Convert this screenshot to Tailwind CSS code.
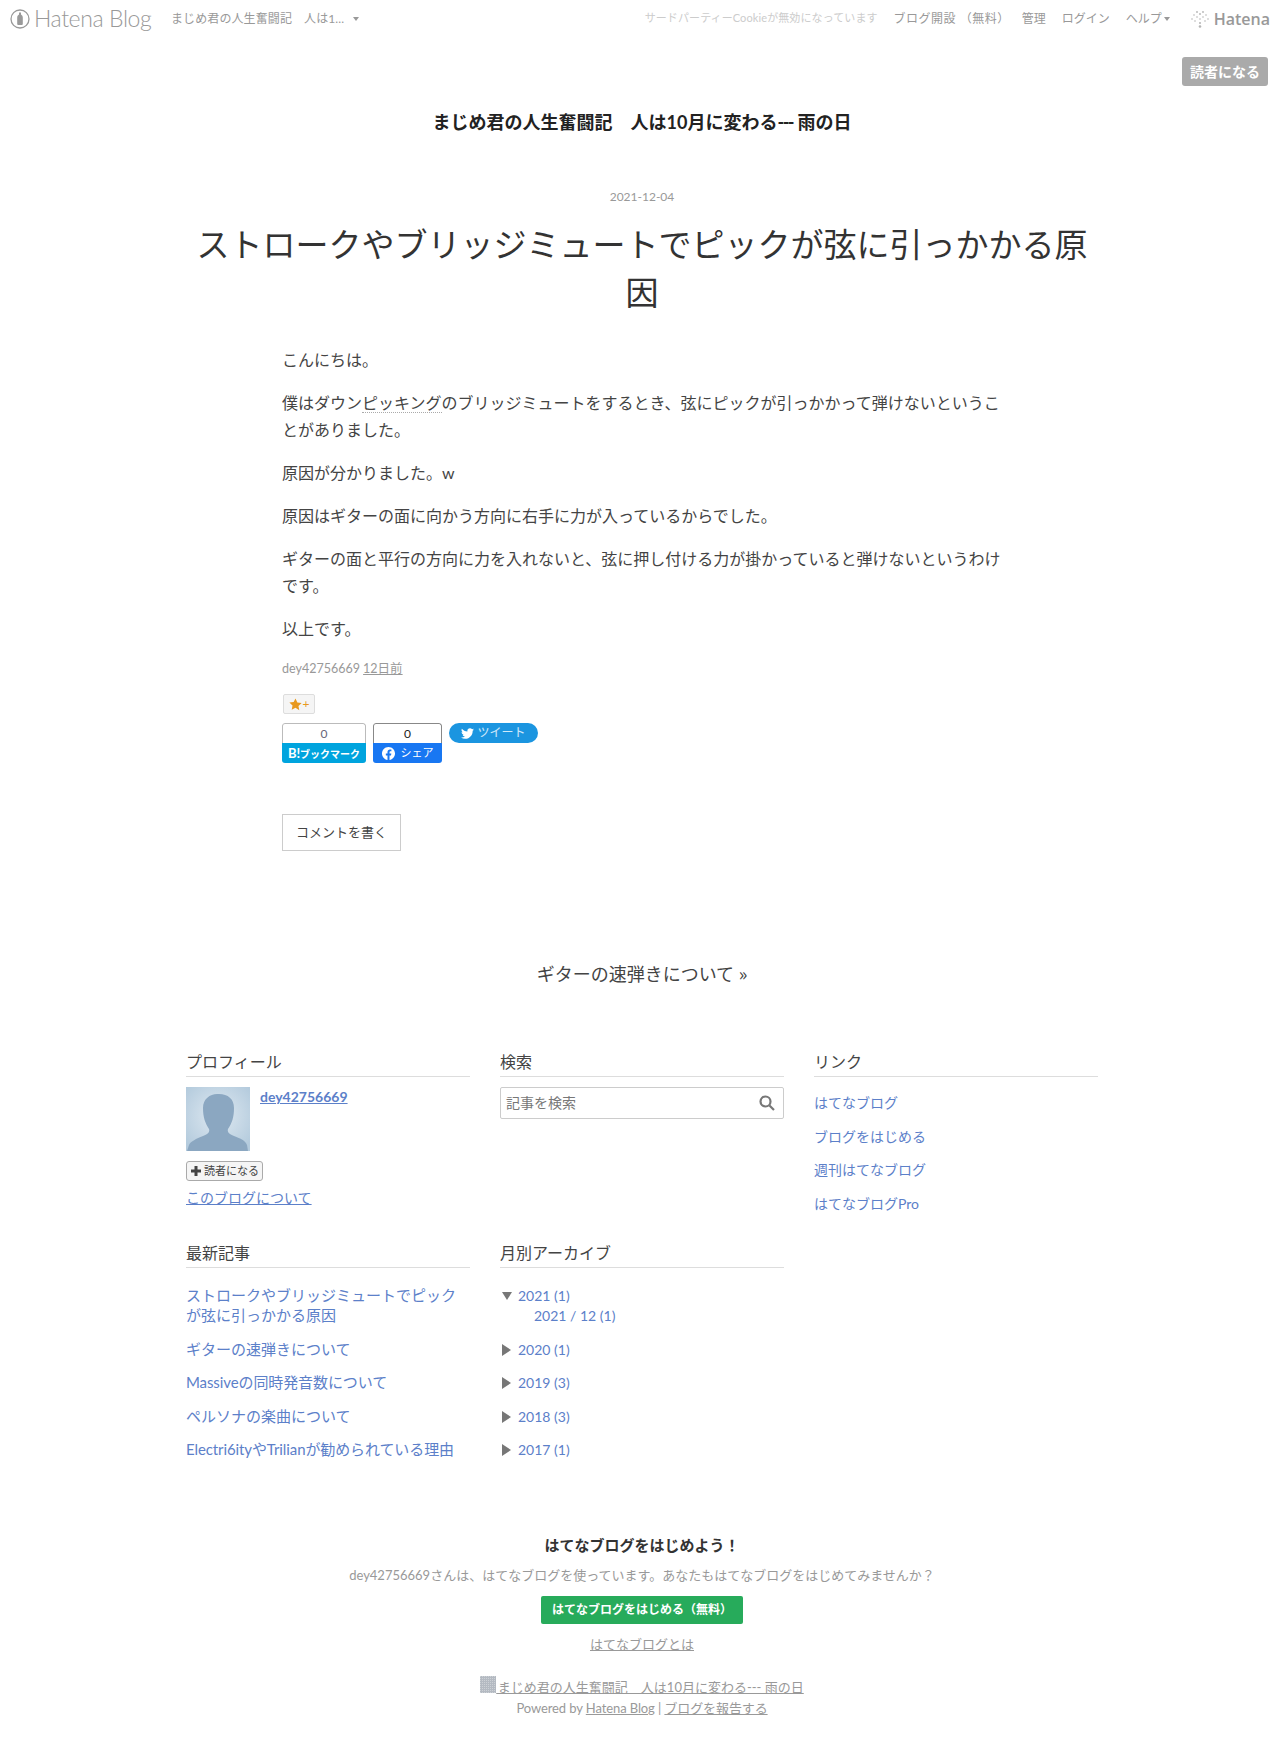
<!DOCTYPE html>
<html lang="ja">
<head>
    <meta charset="UTF-8">
    <meta name="viewport" content="width=device-width, initial-scale=1.0">
    <title>ストロークやブリッジミュートでピックが弦に引っかかる原因</title>
    <script src="https://cdn.jsdelivr.net/npm/@tailwindcss/browser@4"></script>
</head>
<body class="bg-white text-[#444] font-['Lato','Noto_Sans_CJK_JP',sans-serif] [text-spacing-trim:space-all] min-h-[1754px]">
    <!-- hatena navbar -->
    <nav class="h-[37px] flex items-center text-[12px] text-[#999]">
        <div class="flex items-center ml-[10px] w-[161px] gap-[4px]">
            <svg width="20" height="20" viewBox="0 0 20 20" fill="none">
                <circle cx="10" cy="10" r="9" stroke="#999" stroke-width="1.300"/>
                <path d="M9 3.500h2v2c1.300.8 1.800 1.800 1.800 3.200v6.300a1 1 0 01-1 1H8.200a1 1 0 01-1-1V8.700c0-1.400.5-2.400 1.800-3.200z" fill="#999"/>
            </svg>
            <span class="text-[23px] font-light leading-none text-[#999] -tracking-[0.4px] whitespace-nowrap">Hatena Blog</span>
        </div>
        <span class="whitespace-nowrap tracking-[0.1px]">まじめ君の人生奮闘記　人は1...</span>
        <span class="ml-[9px] w-0 h-0 border-x-[3px] border-x-transparent border-t-[4px] border-t-[#999]"></span>
        <div class="ml-auto flex items-center mr-[14px]">
            <span class="text-[11px] text-[#ccc] whitespace-nowrap tracking-[0.1px]">サードパーティーCookieが無効になっています</span>
            <a class="ml-[16px] whitespace-nowrap tracking-[0.5px]">ブログ開設 （無料）</a>
            <a class="ml-[12px]">管理</a>
            <a class="ml-[16px]">ログイン</a>
            <a class="ml-[16px]">ヘルプ</a>
            <span class="ml-[2px] w-0 h-0 border-x-[3px] border-x-transparent border-t-[4px] border-t-[#999]"></span>
            <svg class="ml-[21px]" width="18" height="18" viewBox="0 0 18 18" fill="#b5b5b5">
                <circle cx="6" cy="2" r=".9"/><circle cx="12" cy="2" r=".9"/><circle cx="9" cy="4" r=".9"/>
                <circle cx="3" cy="5" r=".8"/><circle cx="15" cy="5" r=".8"/><circle cx="6" cy="7" r=".8"/><circle cx="12" cy="7" r=".8"/>
                <circle cx="1" cy="9" r=".8"/><circle cx="17" cy="9" r=".8"/><circle cx="9" cy="9" r=".8"/>
                <circle cx="4" cy="11" r=".8"/><circle cx="14" cy="11" r=".8"/><circle cx="9" cy="13" r="1"/><circle cx="9" cy="16.500" r="1.300"/>
            </svg>
            <span class="ml-[5px] text-[16px] font-semibold font-['Open_Sans',sans-serif] text-[#999] leading-none">Hatena</span>
        </div>
    </nav>

    <div class="flex justify-end pr-[16px] pt-[20px]">
        <a class="w-[86px] h-[29px] rounded-[3px] bg-[#aaa] text-white text-[14px] font-bold flex items-center justify-center">読者になる</a>
    </div>

    <header class="text-center mt-[23px]">
        <h1 class="text-[18px] leading-[26px] font-bold text-[#222]">まじめ君の人生奮闘記　人は10月に変わる<span class="-tracking-[1.5px]">---</span> 雨の日</h1>
    </header>

    <!-- article -->
    <article class="mt-[53px]">
        <div class="text-center text-[12px] leading-[18px] text-[#999]">2021-12-04</div>
        <h2 class="mt-[14px] mx-auto w-[900px] text-center text-[33px] leading-[48px] font-normal text-[#333]">ストロークやブリッジミュートでピックが弦に引っかかる原因</h2>
        <div class="mt-[30px] ml-[282px] w-[724px] text-[16px] leading-[27px]">
            <p class="mb-[16px]">こんにちは。</p>
            <p class="mb-[16px]">僕はダウン<span class="border-b border-dotted border-[#aaa]">ピッキング</span>のブリッジミュートをするとき、弦にピックが引っかかって弾けないということがありました。</p>
            <p class="mb-[16px]">原因が分かりました。w</p>
            <p class="mb-[16px]">原因はギターの面に向かう方向に右手に力が入っているからでした。</p>
            <p class="mb-[16px]">ギターの面と平行の方向に力を入れないと、弦に押し付ける力が掛かっていると弾けないというわけです。</p>
            <p>以上です。</p>
        </div>
        <div class="ml-[282px] mt-[18px] text-[12.500px] leading-[18px] text-[#999]">dey42756669 <a class="underline">12日前</a></div>

        <div class="ml-[283px] mt-[16px] w-[32px] h-[20px] rounded-[2px] border border-[#ddd] bg-[#f5f5f5] flex items-center justify-center gap-[1px]">
            <svg width="13" height="13" viewBox="0 0 24 24" fill="#e8981d"><path d="M12 1l3.400 7.300 7.900 1-5.800 5.500 1.500 7.900L12 18l-7 3.700 1.500-7.900L.7 8.300l7.900-1z"/></svg>
            <span class="text-[12px] leading-none text-[#e8981d]">+</span>
        </div>

        <div class="ml-[282px] mt-[9px] flex items-start">
            <div class="w-[84px] h-[40px] rounded-[3px] overflow-hidden flex flex-col">
                <div class="h-[20px] border border-b-0 border-[#bbb] rounded-t-[3px] text-center text-[12px] leading-[19px] text-[#667]">0</div>
                <div class="h-[20px] bg-[#00a4de] text-white text-[10px] font-bold leading-[20px] text-center whitespace-nowrap"><span class="text-[13px]">B!</span>ブックマーク</div>
            </div>
            <div class="ml-[7px] w-[69px] h-[40px] rounded-[3px] overflow-hidden flex flex-col">
                <div class="h-[20px] border border-b-0 border-[#888] rounded-t-[3px] text-center text-[12px] leading-[19px] text-[#222]">0</div>
                <div class="h-[20px] bg-[#1877f2] text-white text-[11px] flex items-center justify-center gap-[6px]">
                    <svg width="13" height="13" viewBox="0 0 24 24" fill="#fff"><path d="M24 12.073c0-6.627-5.373-12-12-12s-12 5.373-12 12c0 5.990 4.388 10.954 10.125 11.854v-8.385H7.078v-3.470h3.047V9.430c0-3.007 1.792-4.669 4.533-4.669 1.312 0 2.686.235 2.686.235v2.953H15.830c-1.491 0-1.956.925-1.956 1.874v2.250h3.328l-.532 3.470h-2.796v8.385C19.612 23.027 24 18.062 24 12.073z"/></svg>
                    <span>シェア</span>
                </div>
            </div>
            <div class="ml-[7px] w-[89px] h-[20px] rounded-full bg-[#1b95e0] text-white/80 text-[12px] flex items-center justify-center gap-[3px]">
                <svg width="13" height="13" viewBox="0 0 24 24" fill="#fff"><path d="M23.953 4.570a10 10 0 01-2.825.775 4.958 4.958 0 002.163-2.723c-.951.555-2.005.959-3.127 1.184a4.920 4.920 0 00-8.384 4.482C7.690 8.095 4.067 6.130 1.640 3.162a4.822 4.822 0 00-.666 2.475c0 1.710.870 3.213 2.188 4.096a4.904 4.904 0 01-2.228-.616v.060a4.923 4.923 0 003.946 4.827 4.996 4.996 0 01-2.212.085 4.936 4.936 0 004.604 3.417 9.867 9.867 0 01-6.102 2.105c-.390 0-.779-.023-1.170-.067a13.995 13.995 0 007.557 2.209c9.053 0 13.998-7.496 13.998-13.985 0-.210 0-.420-.015-.630A9.935 9.935 0 0024 4.590z"/></svg>
                <span>ツイート</span>
            </div>
        </div>

        <a class="ml-[282px] mt-[51px] w-[119px] h-[37px] border border-[#ccc] flex items-center justify-center text-[13px] text-[#444]">コメントを書く</a>
    </article>

    <div class="mt-[109px] text-center text-[18px] leading-[26px] text-[#444]">ギターの速弾きについて <span class="font-['Noto_Sans_CJK_JP',sans-serif]">»</span></div>

    <!-- sidebar modules -->
    <div class="mt-[63px] mx-auto w-[912px] grid grid-cols-[284px_284px_284px] gap-x-[30px]">
        <section class="h-[191px]">
            <h3 class="text-[16px] leading-[24px] h-[27px] font-normal border-b border-[#ddd]">プロフィール</h3>
            <div class="mt-[10px] flex gap-[10px]">
                <svg width="64" height="64" viewBox="0 0 64 64">
                    <defs><radialGradient id="av" cx="50%" cy="45%" r="65%"><stop offset="0" stop-color="#dfe9f1"/><stop offset="1" stop-color="#b4cbdd"/></radialGradient></defs>
                    <rect width="64" height="64" fill="url(#av)"/>
                    <path d="M33 7c9 0 15 5 15 14 0 9-2 15-6 21-1 3 1 5 6 7 7 3 11 4 13 9l1 6H1l2-6c2-4 7-6 14-9 5-2 7-4 6-7-4-6-6-12-6-21 0-9 7-14 14-14z" fill="#8ba7c1"/>
                </svg>
                <a class="text-[14px] leading-[20px] font-bold underline text-[#5c80c9]">dey42756669</a>
            </div>
            <div class="mt-[10px] w-[77px] h-[20px] rounded-[3px] border border-[#aaa] bg-[#f5f5f5] flex items-center justify-center gap-[2px] text-[11px] text-[#444]">
                <svg width="12" height="12" viewBox="0 0 12 12" fill="#444"><path d="M4.500 1h3v3.500H11v3H7.500V11h-3V7.500H1v-3h3.500z"/></svg>
                <span>読者になる</span>
            </div>
            <a class="block mt-[7px] text-[14px] leading-[20px] underline text-[#5c80c9]">このブログについて</a>
        </section>

        <section class="h-[191px]">
            <h3 class="text-[16px] leading-[24px] h-[27px] font-normal border-b border-[#ddd]">検索</h3>
            <div class="mt-[10px] h-[32px] rounded-[2px] border border-[#ccc] flex items-center justify-between pl-[5px] pr-[8px] pb-[2px]">
                <span class="text-[14px] text-[#777]">記事を検索</span>
                <svg class="mt-[2px]" width="16" height="16" viewBox="0 0 16 16" fill="none" stroke="#777" stroke-width="2.200"><circle cx="6.500" cy="6.500" r="5"/><path d="M10.500 10.500L15 15"/></svg>
            </div>
        </section>

        <section class="h-[191px]">
            <h3 class="text-[16px] leading-[24px] h-[27px] font-normal border-b border-[#ddd]">リンク</h3>
            <ul class="mt-[16px] text-[14px] leading-[20px] text-[#5c80c9] flex flex-col gap-[13.500px]">
                <li>はてなブログ</li>
                <li>ブログをはじめる</li>
                <li>週刊はてなブログ</li>
                <li>はてなブログPro</li>
            </ul>
        </section>

        <section>
            <h3 class="text-[16px] leading-[24px] h-[27px] font-normal border-b border-[#ddd]">最新記事</h3>
            <ul class="mt-[17px] text-[15px] leading-[20px] text-[#5c80c9] flex flex-col gap-[13.500px]">
                <li>ストロークやブリッジミュートでピックが弦に引っかかる原因</li>
                <li>ギターの速弾きについて</li>
                <li class="-tracking-[0.1px]">Massiveの同時発音数について</li>
                <li>ペルソナの楽曲について</li>
                <li class="-tracking-[0.1px]">Electri6ityやTrilianが勧められている理由</li>
            </ul>
        </section>

        <section>
            <h3 class="text-[16px] leading-[24px] h-[27px] font-normal border-b border-[#ddd]">月別アーカイブ</h3>
            <ul class="mt-[18px] text-[14px] leading-[20px] text-[#5c80c9] flex flex-col gap-[13.500px]">
                <li>
                    <div class="flex items-center"><span class="w-0 h-0 mx-[2px] border-x-[5px] border-x-transparent border-t-[8px] border-t-[#777]"></span><span class="ml-[4px]">2021 (1)</span></div>
                    <div class="ml-[34px]">2021 / 12 (1)</div>
                </li>
                <li class="flex items-center"><span class="w-0 h-0 ml-[2px] border-y-[6px] border-y-transparent border-l-[9px] border-l-[#777]"></span><span class="ml-[7px]">2020 (1)</span></li>
                <li class="flex items-center"><span class="w-0 h-0 ml-[2px] border-y-[6px] border-y-transparent border-l-[9px] border-l-[#777]"></span><span class="ml-[7px]">2019 (3)</span></li>
                <li class="flex items-center"><span class="w-0 h-0 ml-[2px] border-y-[6px] border-y-transparent border-l-[9px] border-l-[#777]"></span><span class="ml-[7px]">2018 (3)</span></li>
                <li class="flex items-center"><span class="w-0 h-0 ml-[2px] border-y-[6px] border-y-transparent border-l-[9px] border-l-[#777]"></span><span class="ml-[7px]">2017 (1)</span></li>
            </ul>
        </section>
    </div>

    <!-- footer -->
    <footer class="mt-[74px] flex flex-col items-center text-[#999]">
        <h3 class="text-[15px] leading-[22px] font-bold text-[#333]">はてなブログをはじめよう！</h3>
        <p class="mt-[9px] text-[13px] leading-[20px]">dey42756669さんは、はてなブログを使っています。あなたもはてなブログをはじめてみませんか？</p>
        <a class="mt-[11px] w-[202px] h-[28px] rounded-[2px] bg-[#27ab5b] text-white text-[12px] font-bold flex items-center justify-center whitespace-nowrap">はてなブログをはじめる（無料）</a>
        <a class="mt-[10px] text-[13px] leading-[20px] underline">はてなブログとは</a>
        <div class="mt-[23px] flex items-start text-[13px] leading-[20px]">
            <svg class="-mt-[1px]" width="16" height="17" viewBox="0 0 16 17">
                <defs><pattern id="chk" width="2" height="2" patternUnits="userSpaceOnUse"><rect width="2" height="2" fill="#b4bac2"/><rect width="1" height="1" fill="#cdd1d6"/></pattern></defs>
                <rect width="16" height="17" fill="url(#chk)"/>
            </svg>
            <a class="underline">&thinsp;まじめ君の人生奮闘記　人は10月に変わる--- 雨の日</a>
        </div>
        <p class="mt-[1px] text-[13px] leading-[20px] -tracking-[0.1px]">Powered by <a class="underline">Hatena Blog</a> | <a class="underline">ブログを報告する</a></p>
    </footer>
</body>
</html>
